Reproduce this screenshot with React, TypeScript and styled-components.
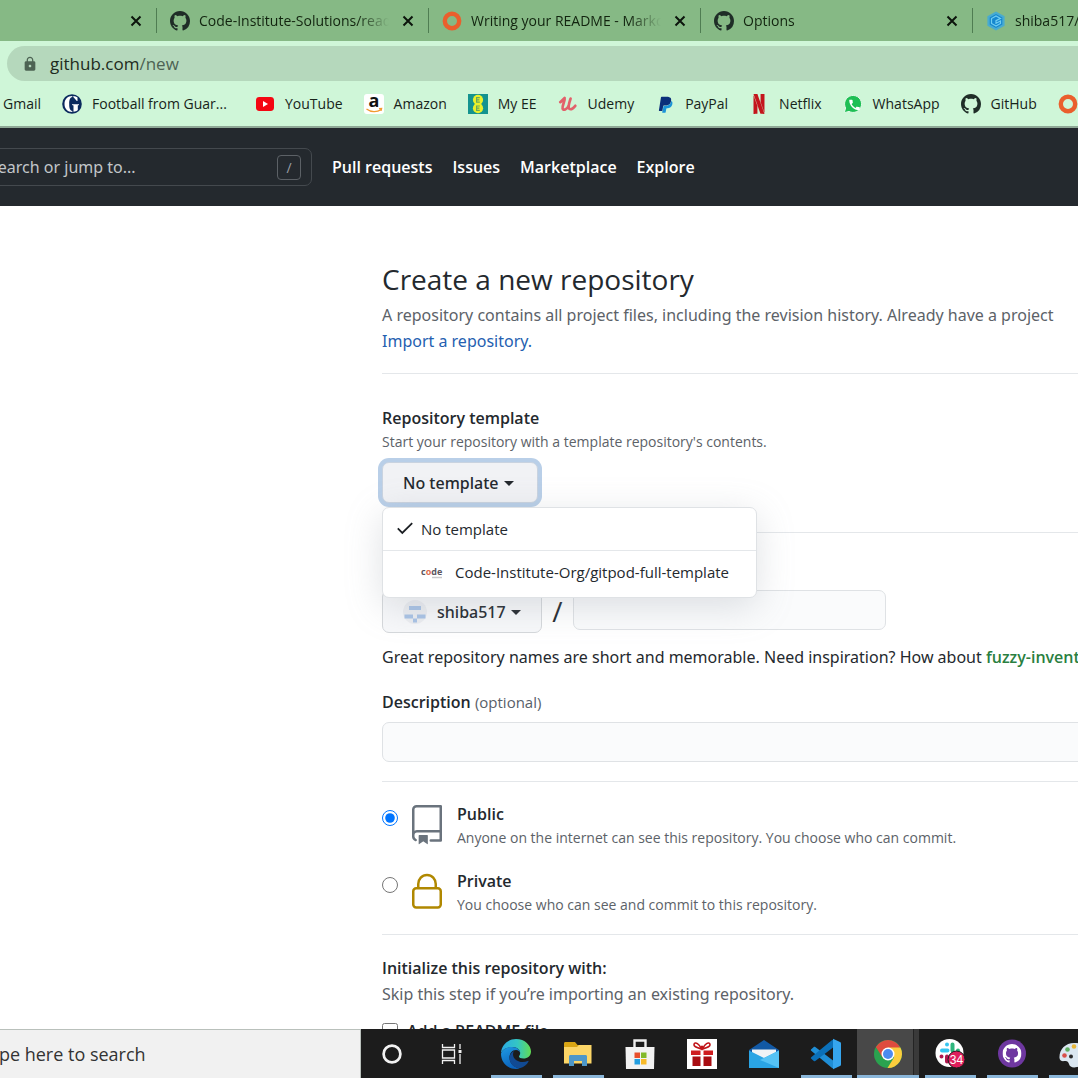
import React from "react";
import styled, { createGlobalStyle, css } from "styled-components";
import { MdCall, MdLock } from "react-icons/md";
import { SiNetflix } from "react-icons/si";

const GlobalStyle = createGlobalStyle`
  *, *::before, *::after { box-sizing: border-box; }
  body {
    margin: 0;
    font-family: "Open Sans", "Noto Sans", sans-serif;
    color: #24292e;
    background: #fff;
  }
  button, input { font: inherit; color: inherit; }
  h1, h2, p { margin: 0; }
`;

const bodyFont = css`
  font-family: "Noto Sans", "Open Sans", sans-serif;
  font-size: 16px;
`;

const Screen = styled.div`
  display: flex;
  flex-direction: column;
  height: 100vh;
  overflow: hidden;
`;

/* ---------- Browser chrome ---------- */

const TabStrip = styled.div`
  display: flex;
  flex: none;
  height: 41px;
  background: #86b985;
`;

const Tab = styled.div<{ $trailing?: boolean }>`
  display: flex;
  align-items: center;
  flex: none;
  gap: 9px;
  width: ${(p) => (p.$trailing ? "156px" : "272px")};
  justify-content: ${(p) => (p.$trailing ? "flex-end" : "flex-start")};
  padding: 0 10px 0 14px;
  color: #12240f;
  font-size: 14px;
  line-height: 20px;

  & + & {
    background: linear-gradient(#4f7d52, #4f7d52) 0 8px / 1px 25px no-repeat;
  }
`;

const TabTitle = styled.span`
  flex: 1;
  min-width: 0;
  overflow: hidden;
  white-space: nowrap;
  mask-image: linear-gradient(to right, #000 calc(100% - 32px), transparent);
`;

const TabClose = styled.button`
  display: flex;
  align-items: center;
  justify-content: center;
  flex: none;
  width: 20px;
  height: 20px;
  padding: 0;
  border: 0;
  background: none;
`;

const Toolbar = styled.div`
  flex: none;
  height: 87px;
  padding-top: 5px;
  background: #cff6d8;
  border-bottom: 2px solid #8fa896;
`;

const AddressBar = styled.div`
  display: flex;
  align-items: center;
  gap: 12px;
  height: 35px;
  margin-left: 7px;
  padding-left: 15px;
  border-radius: 18px 0 0 18px;
  background: #b5d8bc;
  color: #4d6353;
  font-size: 17px;
  line-height: 24px;
`;

const Host = styled.span`
  color: #1d2b20;
`;

const Bookmarks = styled.nav`
  display: flex;
  align-items: center;
  gap: 21px;
  height: 45px;
  padding-left: 3px;
`;

const Bookmark = styled.a<{ $truncated?: boolean }>`
  display: flex;
  align-items: center;
  flex: none;
  gap: 10px;
  min-width: ${(p) => (p.$truncated ? "172px" : "0")};
  color: #17241a;
  font-size: 14px;
  line-height: 20px;
  text-decoration: none;
`;

/* ---------- GitHub header ---------- */

const SiteHeader = styled.header`
  display: flex;
  align-items: center;
  flex: none;
  gap: 20px;
  height: 78px;
  background: #24292e;
`;

const SearchBox = styled.label`
  display: flex;
  align-items: center;
  flex: none;
  width: 332px;
  height: 38px;
  margin-left: -20px;
  padding-right: 10px;
  border: 1px solid #44494e;
  border-radius: 7px;
`;

const SearchInput = styled.input`
  flex: 1;
  min-width: 0;
  padding: 0 0 0 8px;
  border: 0;
  outline: 0;
  background: none;
  ${bodyFont}

  &::placeholder {
    color: #c2c6c9;
    opacity: 1;
  }
`;

const SlashKey = styled.kbd`
  width: 24px;
  height: 25px;
  border: 1px solid #5c6166;
  border-radius: 4px;
  color: #9a9fa4;
  font: 14px/23px "Open Sans", sans-serif;
  text-align: center;
`;

const HeaderLink = styled.a`
  color: #fff;
  font-size: 16px;
  font-weight: 600;
  line-height: 24px;
  text-decoration: none;
`;

/* ---------- Form ---------- */

const Main = styled.main`
  flex: 1;
  min-height: 0;
  overflow: hidden;
  padding: 53px 0 0 382px;
  ${bodyFont}
  line-height: 26px;
`;

const Title = styled.h1`
  margin-bottom: 3px;
  font-family: "Open Sans", sans-serif;
  font-size: 28px;
  font-weight: 400;
  line-height: 40px;
`;

const Lead = styled.p`
  color: #5c6268;
  white-space: nowrap;
`;

const Link = styled.a`
  color: #2460b0;
  text-decoration: none;
`;

const Rule = styled.hr<{ $top: number; $bottom: number }>`
  height: 1px;
  margin: ${(p) => p.$top}px 0 ${(p) => p.$bottom}px;
  border: 0;
  background: #e4e7ea;
`;

const strongText = css`
  font-family: "Open Sans", sans-serif;
  font-size: 16px;
  font-weight: 600;
`;

const Heading = styled.h2`
  ${strongText}
  line-height: 26px;
`;

const Note = styled.span`
  display: block;
  color: #5c6268;
  font-family: "Open Sans", sans-serif;
  font-size: 14px;
  line-height: 22px;
`;

const MenuAnchor = styled.div`
  position: relative;
  margin-top: 9px;
`;

const selectButton = css`
  display: flex;
  align-items: center;
  gap: 5px;
  padding: 0 20px;
  border: 1px solid #d5d8db;
  border-radius: 7px;
  font-weight: 500;
  line-height: 24px;
`;

const TemplateButton = styled.button`
  ${selectButton}
  height: 41px;
  width: 156px;
  background: #f1f2f5;
  border-color: #c9d3e0;
  box-shadow: 0 0 0 4px #b9cfe8;
`;

const OwnerButton = styled.button`
  ${selectButton}
  height: 43px;
  width: 160px;
  background: #f7f8fa;
`;

const OwnerName = styled.span`
  margin-left: 5px;
`;

const Caret = styled.span`
  margin-top: 2px;
  border: 5px solid transparent;
  border-top-color: #24292e;
  border-bottom: 0;
`;

const Menu = styled.div`
  position: absolute;
  z-index: 1;
  top: 45px;
  left: 0;
  width: 375px;
  border: 1px solid #dfe2e5;
  border-radius: 7px;
  background: #fff;
  box-shadow: 0 8px 36px rgba(140, 149, 159, 0.28);
`;

const MenuItem = styled.button`
  display: flex;
  align-items: center;
  width: 100%;
  height: 42px;
  padding: 0 14px;
  border: 0;
  background: none;
  font-family: "Open Sans", sans-serif;
  font-size: 15px;
  font-weight: 500;
  line-height: 22px;
  white-space: nowrap;

  & + & {
    height: 47px;
    padding: 0 0 4px 38px;
    border-top: 1px solid #e4e7ea;
  }
`;

const MenuLabel = styled.span<{ $gap: number }>`
  margin-left: ${(p) => p.$gap}px;
`;

const NameRow = styled.div`
  display: flex;
  align-items: flex-start;
`;

const Slash = styled.span`
  width: 31px;
  font-family: "Open Sans", sans-serif;
  font-size: 28px;
  line-height: 43px;
  text-align: center;
`;

const TextField = styled.input`
  height: 40px;
  padding: 0 12px;
  border: 1px solid #dfe2e5;
  border-radius: 7px;
  background: #fafbfc;
`;

const NameField = styled(TextField)`
  width: 313px;
`;

const DescriptionField = styled(TextField)`
  display: block;
  width: calc(100% + 16px);
  margin-top: 7px;
`;

const Hint = styled.p`
  margin-top: 11px;
  white-space: nowrap;
`;

const Suggestion = styled.strong`
  color: #2a7f41;
  ${strongText}
`;

const FieldLabel = styled.label`
  display: block;
  margin-top: 19px;
  ${strongText}
`;

const Optional = styled.small`
  color: #586069;
  font-size: 15px;
  font-weight: 500;
`;

const Choice = styled.label<{ $top: number }>`
  display: flex;
  margin-top: ${(p) => p.$top}px;
`;

const Radio = styled.input`
  width: 16px;
  height: 16px;
  margin: 9px 14px 0 0;
  accent-color: #0075ff;
`;

const ChoiceIcon = styled.svg`
  flex: none;
  width: 40px;
  height: 40px;
  margin: 4px 10px 0 -5px;
`;

const ChoiceTitle = styled.span`
  display: block;
  ${strongText}
`;

const CheckRow = styled.label`
  display: flex;
  align-items: center;
  gap: 9px;
  margin-top: 11px;
  ${strongText}
`;

const Checkbox = styled.input`
  width: 16px;
  height: 16px;
  margin: 0;
`;

/* ---------- Taskbar ---------- */

const Taskbar = styled.footer`
  display: flex;
  flex: none;
  height: 49px;
  background: #1c1c1c;
`;

const TaskSearch = styled.input`
  flex: none;
  width: 381px;
  margin-left: -20px;
  padding: 0;
  border: 1px solid #b9c0bb;
  border-width: 1px 1px 0 0;
  border-radius: 0;
  background: #f1f1f1;
  font-size: 18px;

  &::placeholder {
    color: #333;
    opacity: 1;
  }
`;

const TaskButton = styled.button<{ $running?: boolean; $active?: boolean }>`
  display: flex;
  align-items: center;
  justify-content: center;
  flex: none;
  width: 62px;
  padding: 0;
  border: 0;
  background: ${(p) =>
    p.$active
      ? "linear-gradient(#8ab6d9, #8ab6d9) 0 100% / 100% 3px no-repeat, linear-gradient(90deg, #484848 56px, #242424 56px, #242424 57px, #3a3a3a 57px)"
      : p.$running
        ? "linear-gradient(#8ab6d9, #8ab6d9) 50% 100% / 51px 3px no-repeat"
        : "none"};
`;

/* ---------- Drawings ---------- */

const MARK =
  "M8 0C3.58 0 0 3.58 0 8c0 3.54 2.29 6.53 5.47 7.59.4.07.55-.17.55-.38 0-.19-.01-.82-.01-1.49-2.01.37-2.53-.49-2.69-.94-.09-.23-.48-.94-.82-1.13-.28-.15-.68-.52-.01-.53.63-.01 1.08.58 1.23.82.72 1.21 1.87.87 2.33.66.07-.52.28-.87.51-1.07-1.78-.2-3.64-.89-3.64-3.95 0-.87.31-1.59.82-2.15-.08-.2-.36-1.02.08-2.12 0 0 .67-.21 2.2.82.64-.18 1.32-.27 2-.27.68 0 1.36.09 2 .27 1.53-1.04 2.2-.82 2.2-.82.44 1.1.16 1.92.08 2.12.51.56.82 1.27.82 2.15 0 3.07-1.87 3.75-3.65 3.95.29.25.54.73.54 1.48 0 1.07-.01 1.93-.01 2.2 0 .21.15.46.55.38A8.013 8.013 0 0 0 16 8c0-4.42-3.58-8-8-8z";

const Octocat = () => (
  <svg width="20" height="20" viewBox="0 0 16 16" fill="#1f2d27">
    <path d={MARK} />
  </svg>
);

const Ring = () => (
  <svg width="20" height="20" viewBox="0 0 20 20">
    <circle cx="10" cy="10" r="7.2" fill="none" stroke="#ea5f2d" strokeWidth="4.4" />
  </svg>
);

const Cube = () => (
  <svg width="20" height="20" viewBox="0 0 20 20">
    <path d="M10 .4 18.6 5.2v9.6L10 19.6 1.4 14.8V5.2z" fill="#48abd0" />
    <path d="M10 3 16.300 6.500v7L10 17l-6.300-3.500v-7z" fill="#1687cf" />
    <path d="M14.500 7.400 10 4.900 5.500 7.500v5l4.500 2.600 4.500-2.600V10L10 12.300V9.600z" fill="none" stroke="#6fcdf0" strokeWidth="1.200" />
  </svg>
);

const Cross = () => (
  <svg width="12" height="12" viewBox="0 0 12 12">
    <path d="m1.5 1.5 9 9m0-9-9 9" stroke="#0c150c" strokeWidth="2" />
  </svg>
);

const Guardian = () => (
  <svg width="20" height="20" viewBox="0 0 20 20">
    <circle cx="10" cy="10" r="9.8" fill="#0b2a5e" />
    <path d="M10.300 2C5.500 2 2.500 5.500 2.500 10s3 8 7.800 8v-1C7.800 16.500 7.200 14 7.200 10s.6-6.500 3.100-7z" fill="#fff" />
    <path d="M11.300 2c1.700.100 3.200.7 4.200 1.500v3.500h-.700L11.300 3z" fill="#fff" />
    <path d="M10 10.300h7v.8l-1.200.5v4.400c-1 .9-2.600 1.600-4.300 1.800v-6.200l-1.500-.5z" fill="#fff" />
  </svg>
);

const YouTube = () => (
  <svg width="20" height="20" viewBox="0 0 20 20">
    <rect x="1" y="3" width="18" height="14" rx="3.400" fill="#f40612" />
    <path d="m8 7 5 3-5 3z" fill="#fff" />
  </svg>
);

const Amazon = () => (
  <svg width="20" height="20" viewBox="0 0 20 20">
    <rect width="20" height="20" rx="3" fill="#fff" />
    <text x="10" y="13" textAnchor="middle" fontFamily="Open Sans" fontWeight="700" fontSize="18" fill="#111">
      a
    </text>
    <path d="M2.500 15c4.500 3.400 10.500 3.400 14.400.700M15 14.600l2.600-.2-.6 2.500" fill="none" stroke="#f29a2e" strokeWidth="1.300" />
  </svg>
);

const EE = () => (
  <svg width="20" height="20" viewBox="0 0 20 20">
    <rect width="20" height="20" fill="#14938f" />
    <circle cx="10" cy="5.800" r="5.100" fill="#eaf02a" />
    <circle cx="10" cy="14.200" r="5.100" fill="#eaf02a" />
    <path d="M11.800 3.700H8.600v4.400h3.200M8.600 5.900h2.800M11.800 12H8.600v4.400h3.200M8.600 14.200h2.800" fill="none" stroke="#6aa85a" strokeWidth="1.200" />
  </svg>
);

const Udemy = () => (
  <svg width="20" height="20" viewBox="0 0 20 20" fill="none" stroke="#e2616b" strokeLinecap="round" strokeLinejoin="round">
    <path d="M2.200 8.200C4 7.200 5.600 5 6.600 4 7.400 7 3.800 11.500 4.600 14.600c.7 2.200 4.200 1 6-2.600" strokeWidth="2.700" />
    <path d="M12.600 4.600c-1 3-3 8.400-1.300 10.200 1.500 1.200 4-.6 6-3" strokeWidth="2.700" />
  </svg>
);

const PayPal = () => (
  <svg width="20" height="20" viewBox="-4 -4 30 30">
    <path
      fill="#1b94d8"
      d="M21.222 6.917a3.350 3.350 0 0 0-.607-.541c-.013.076-.026.175-.041.254-.93 4.778-4.005 7.201-9.138 7.201h-2.190a.563.563 0 0 0-.556.479l-1.187 7.527h-.506l-.24 1.516a.56.56 0 0 0 .554.647h3.882c.46 0 .85-.334.922-.788.06-.26.76-4.852.816-5.090a.932.932 0 0 1 .923-.788h.58c3.760 0 6.705-1.528 7.565-5.946.36-1.847.174-3.388-.777-4.471z"
    />
    <path
      fill="#0b2f7a"
      d="M7.076 21.337H2.470a.641.641 0 0 1-.633-.74L4.944.901C5.026.382 5.474 0 5.998 0h7.460c2.570 0 4.578.543 5.690 1.810 1.010 1.150 1.304 2.420 1.012 4.287-.023.143-.047.288-.077.437-.983 5.050-4.349 6.797-8.647 6.797h-2.190c-.524 0-.968.382-1.050.9l-1.120 7.106z"
    />
  </svg>
);

const WhatsApp = () => (
  <svg width="20" height="20" viewBox="0 0 20 20">
    <path d="M1.300 18.700 2.600 14A8.500 8.500 0 1 1 6 17.400z" fill="#1fbf55" stroke="#e4fbe9" strokeWidth="1" />
    <MdCall x="4.500" y="4" width="11.500" height="11.500" color="#fff" />
  </svg>
);

const Check = () => (
  <svg width="16" height="16" viewBox="0 0 16 16">
    <path d="m.8 7.400 4.500 4.500L15.200 2.200" fill="none" stroke="#1b1f23" strokeWidth="1.800" />
  </svg>
);

const CodeLogo = () => (
  <svg width="22" height="16" viewBox="0 0 22 16" fontFamily="Open Sans" fontWeight="700">
    <text x="0" y="11" fontSize="9" fill="#5b5560">
      c<tspan fill="#e06a4c">o</tspan>de
    </text>
    <path d="M11 13.500h10" stroke="#c9c9cc" strokeWidth="1.500" />
  </svg>
);

const Avatar = () => (
  <svg width="24" height="24" viewBox="0 0 24 24">
    <circle cx="12" cy="12" r="12" fill="#ebedf1" />
    <path d="M6 6h12v4H6zM1.500 14.500H10v4H1.500zM14 14.500h8.500v4H14zM10 18.500h4v4h-4z" fill="#a9c3e6" />
  </svg>
);

const RepoIcon = () => (
  <ChoiceIcon viewBox="0 0 24 24" fill="#6a737d" fillRule="evenodd">
    <path d="M3 2.750A2.750 2.750 0 0 1 5.750 0h14.500a.75.75 0 0 1 .75.75v20.500a.75.75 0 0 1-.75.75h-6a.75.75 0 0 1 0-1.500h5.250v-4H6A1.500 1.500 0 0 0 4.500 18v.75c0 .716.43 1.334 1.050 1.605a.75.75 0 0 1-.6 1.374A3.250 3.250 0 0 1 3 18.750v-16zM19.500 1.500V15H6c-.546 0-1.059.146-1.500.401V2.750c0-.69.56-1.250 1.250-1.250H19.500z" />
    <path d="M7 18.250a.25.25 0 0 1 .25-.25h5a.25.25 0 0 1 .25.25v5.010a.25.25 0 0 1-.397.201l-2.206-1.604a.25.25 0 0 0-.294 0L7.397 23.460a.25.25 0 0 1-.397-.2v-5.010z" />
  </ChoiceIcon>
);

const LockIcon = () => (
  <ChoiceIcon viewBox="0 0 24 24" fill="none" stroke="#b08800" strokeWidth="1.500">
    <rect x="3.750" y="9.750" width="16.500" height="11.500" rx="1.750" />
    <path d="M6.750 9.750v-2.500C6.750 4.200 9 1.750 12 1.750s5.250 2.450 5.250 5.500v2.500" />
  </ChoiceIcon>
);

const Cortana = () => (
  <svg width="22" height="22" viewBox="0 0 22 22">
    <circle cx="11" cy="11" r="8.400" fill="none" stroke="#f2f2f2" strokeWidth="2.700" />
  </svg>
);

const TaskView = () => (
  <svg width="26" height="22" viewBox="0 0 26 22" fill="none" stroke="#f2f2f2" strokeWidth="1.300">
    <path d="M1.500 1v3.500h12V1M1.500 21v-3.500h12V21M1.500 7h12v8h-12zM19 1v5M19 11v10" />
    <rect x="17.500" y="7" width="3" height="3" fill="#f2f2f2" stroke="none" />
  </svg>
);

const Edge = () => (
  <svg width="32" height="32" viewBox="0 0 32 32">
    <defs>
      <linearGradient id="edgeTop" x1="0" y1="0.500" x2="1" y2="0.500">
        <stop offset="0" stopColor="#2aa9e4" />
        <stop offset="0.550" stopColor="#34c6c4" />
        <stop offset="1" stopColor="#62dc52" />
      </linearGradient>
      <linearGradient id="edgeBase" x1="0" y1="0" x2="0.400" y2="1">
        <stop offset="0" stopColor="#1f9be2" />
        <stop offset="1" stopColor="#0b63bd" />
      </linearGradient>
    </defs>
    <path d="M1 15C1.500 7 8 1 16 1c9 0 15 6.500 15 12.500 0 4.500-3.500 7-7.500 7-3 0-4.500-1-4.500-2 0-.8 1.200-1.300 1.200-3.500 0-3-3-6-8-6C7 9 3 11 1 15z" fill="url(#edgeTop)" />
    <path d="M1 15.500C3 11 7 9 12 9c5 0 8.200 3 8.200 6-.4-1.500-1.800-3-4.200-3-4 0-6.500 3.500-6.500 7.500 0 6 5 10.500 10.500 10.700-1.300.500-2.600.800-4 .800C7.500 31 1 24.500 1 15.500z" fill="url(#edgeBase)" />
    <path d="M14 13c-3 1.500-4.500 4-4.500 7 0 6 5 10.500 11 10.100 3.500-1.100 6.500-3.600 8-6.600.3-.6-.2-.9-.8-.6C21.500 26 13 22.500 13 16.500c0-1.400.3-2.500 1-3.500z" fill="#114a93" />
  </svg>
);

const Folder = () => (
  <svg width="32" height="32" viewBox="0 0 32 32">
    <path d="M2 5.500C2 4.700 2.500 4 3.500 4H13l2.500 3H29v4H2z" fill="#d9a514" />
    <path d="M2 9h13l2-2h12.500v18.500H2z" fill="#fbd567" />
    <path d="M7 28V18.500C7 17.500 7.700 17 8.500 17h15c.800 0 1.500.500 1.500 1.500V28h-5v-5h-8v5z" fill="#4d97c9" />
  </svg>
);

const Store = () => (
  <svg width="32" height="32" viewBox="0 0 32 32">
    <path d="M10.500 9V2.500h11V9" fill="none" stroke="#eeeeee" strokeWidth="2.400" />
    <path d="M1.500 9h29l-.500 22H2z" fill="#f2f2f2" />
    <path d="M10.500 14.500H16V20h-5.500z" fill="#e84f2c" />
    <path d="M17 14.500h5.500V20H17z" fill="#82b92b" />
    <path d="M10.500 21H16v5.500h-5.500z" fill="#239ee0" />
    <path d="M17 21h5.500v5.500H17z" fill="#f8ba28" />
  </svg>
);

const Gift = () => (
  <svg width="30" height="30" viewBox="0 0 30 30">
    <rect width="30" height="30" fill="#fff" />
    <path d="M4 11.500h9.500V16H4zM16.500 11.500H26V16h-9.500z" fill="#cf1c1f" />
    <path d="M5.500 17.500h8V27h-8zM16.500 17.500h8V27h-8z" fill="#a80d12" />
    <path d="M14.800 10.500C12.500 4.500 8 2.500 7 5.200c-.6 3 3.700 3.600 8 5 4.300-1.400 8.600-2 8-5-1-2.700-5.500-.7-7.800 5.300z" fill="none" stroke="#c01318" strokeWidth="1.600" />
    <circle cx="15" cy="8" r="1.500" fill="#c01318" />
  </svg>
);

const Mail = () => (
  <svg width="32" height="32" viewBox="0 0 32 32">
    <path d="M1 12 16 2l15 10v4H1z" fill="#1259a5" />
    <path d="M4 11.500h24V20L16 25 4 20z" fill="#f0f3f6" />
    <path d="M1 12.500 16 20l15-7.500V30H1z" fill="#2aa4e4" />
    <path d="M31 12.500 12 22l19 8z" fill="#55c2f4" />
  </svg>
);

const VsCode = () => (
  <svg width="32" height="32" viewBox="0 0 32 32">
    <path d="m1 11.500 2.500-2.300c.5-.5 1.200-.5 1.800-.1L24 23.200V30c-.8.5-1.500.3-2.200-.3L1.200 12.800c-.5-.4-.5-.9-.2-1.300z" fill="#1f8ed6" />
    <path d="m1 20.500 2.500 2.300c.5.5 1.200.5 1.800.1L24 8.800V2c-.8-.5-1.500-.3-2.200.3L1.200 19.200c-.5.4-.5.9-.2 1.300z" fill="#0b70b9" />
    <path d="M23 .8 30 4c.7.3 1 .8 1 1.500v21c0 .7-.3 1.200-1 1.500l-7 3.200z" fill="#36a6ef" />
  </svg>
);

const Chrome = () => (
  <svg width="30" height="30" viewBox="0 0 30 30">
    <circle cx="15" cy="15" r="14" fill="#2aa24f" />
    <path d="M15 15 2.900 8A14 14 0 0 1 27.100 8z" fill="#df4c3e" />
    <path d="M15 8.500h12.400A14 14 0 0 1 14.500 29L21 18.500z" fill="#fbcd3d" />
    <path d="M2.900 8 9.500 18.500 15 15V8.500z" fill="#df4c3e" />
    <circle cx="15" cy="15" r="6.500" fill="#fff" />
    <circle cx="15" cy="15" r="5" fill="#4c8bf0" />
  </svg>
);

const Slack = () => (
  <svg width="32" height="32" viewBox="0 0 32 32">
    <circle cx="15.500" cy="15" r="14" fill="#fff" />
    <g strokeWidth="4" strokeLinecap="round" fill="none">
      <path d="M8 12.500h5.500M13 6.500v.01" stroke="#36c5f0" />
      <path d="M18.500 6.500v6M24 12.500v.01" stroke="#2eb67d" />
      <path d="M18.500 18.500H24" stroke="#ecb22e" />
      <path d="M13 18.500v5M7.500 18.500v.01" stroke="#b0184f" />
    </g>
    <circle cx="22.500" cy="21.500" r="8.500" fill="#de1f5c" stroke="#1c1c1c" strokeWidth="1" />
    <text x="22.500" y="25.500" textAnchor="middle" fontFamily="Liberation Sans" fontSize="12" fill="#fff">
      34
    </text>
  </svg>
);

const GitHubDesktop = () => (
  <svg width="30" height="30" viewBox="0 0 30 30">
    <circle cx="15" cy="14.500" r="14" fill="#6e37a0" />
    <svg x="5.500" y="5" width="19" height="19" viewBox="0 0 16 16">
      <path d={MARK} fill="#fff" />
    </svg>
  </svg>
);

const Paint = () => (
  <svg width="32" height="32" viewBox="0 0 32 32">
    <path d="M18 5C8 4 1 11 1.500 20c.300 3 3 3.500 5 3 3-.500 4 1 4.500 3 .600 3 4 4 8 3 7-1.500 12-7 12-13S26 5.800 18 5z" fill="#dbe7f1" />
    <circle cx="6.500" cy="17.500" r="2.300" fill="#d8504a" />
    <circle cx="9.500" cy="11.500" r="2.300" fill="#5fae62" />
    <circle cx="16" cy="8.500" r="2.300" fill="#e8b63a" />
    <circle cx="13" cy="18.500" r="2" fill="#2a2a2a" />
    <path d="M22 2 20 20l5 6 4-22z" fill="#c98c4b" />
  </svg>
);

/* ---------- Page ---------- */

const tabs = [
  { title: "Code-Institute-Solutions/readme", icon: <Octocat /> },
  { title: "Writing your README - Markdown", icon: <Ring /> },
  { title: "Options", icon: <Octocat /> },
  { title: "shiba517/", icon: <Cube /> },
];

const bookmarks = [
  { label: "Gmail", icon: null },
  { label: "Football from Guar...", icon: <Guardian />, truncated: true },
  { label: "YouTube", icon: <YouTube /> },
  { label: "Amazon", icon: <Amazon /> },
  { label: "My EE", icon: <EE /> },
  { label: "Udemy", icon: <Udemy /> },
  { label: "PayPal", icon: <PayPal /> },
  { label: "Netflix", icon: <SiNetflix size={20} color="#c4151c" /> },
  { label: "WhatsApp", icon: <WhatsApp /> },
  { label: "GitHub", icon: <Octocat /> },
  { label: "", icon: <Ring /> },
];

const apps = [
  { name: "Cortana", icon: <Cortana /> },
  { name: "Task View", icon: <TaskView /> },
  { name: "Edge", icon: <Edge />, running: true },
  { name: "File Explorer", icon: <Folder />, running: true },
  { name: "Store", icon: <Store /> },
  { name: "Gift", icon: <Gift /> },
  { name: "Mail", icon: <Mail /> },
  { name: "Visual Studio Code", icon: <VsCode />, running: true },
  { name: "Chrome", icon: <Chrome />, active: true },
  { name: "Slack", icon: <Slack />, running: true },
  { name: "GitHub Desktop", icon: <GitHubDesktop />, running: true },
  { name: "Paint", icon: <Paint />, running: true },
];

export default function App() {
  return (
    <Screen>
      <GlobalStyle />
      <TabStrip>
        <Tab $trailing>
          <TabClose aria-label="Close tab">
            <Cross />
          </TabClose>
        </Tab>
        {tabs.map((tab) => (
          <Tab key={tab.title}>
            {tab.icon}
            <TabTitle>{tab.title}</TabTitle>
            <TabClose aria-label="Close tab">
              <Cross />
            </TabClose>
          </Tab>
        ))}
      </TabStrip>
      <Toolbar>
        <AddressBar>
          <MdLock size={16} />
          <span>
            <Host>github.com</Host>/new
          </span>
        </AddressBar>
        <Bookmarks>
          {bookmarks.map((item, i) => (
            <Bookmark key={i} href="#" aria-label={item.label || "Bookmark"} $truncated={item.truncated}>
              {item.icon}
              {item.label}
            </Bookmark>
          ))}
        </Bookmarks>
      </Toolbar>

      <SiteHeader>
        <SearchBox>
          <SearchInput aria-label="Search" placeholder="Search or jump to..." />
          <SlashKey>/</SlashKey>
        </SearchBox>
        <HeaderLink href="#">Pull requests</HeaderLink>
        <HeaderLink href="#">Issues</HeaderLink>
        <HeaderLink href="#">Marketplace</HeaderLink>
        <HeaderLink href="#">Explore</HeaderLink>
      </SiteHeader>

      <Main>
        <Title>Create a new repository</Title>
        <Lead>
          A repository contains all project files, including the revision history. Already have a project
          <br />
          <Link href="#">Import a repository.</Link>
        </Lead>
        <Rule $top={19} $bottom={31} />

        <Heading>Repository template</Heading>
        <Note>Start your repository with a template repository's contents.</Note>
        <MenuAnchor>
          <TemplateButton aria-haspopup="menu" aria-expanded="true">
            No template
            <Caret />
          </TemplateButton>
          <Menu role="menu">
            <MenuItem role="menuitem">
              <Check />
              <MenuLabel $gap={8}>No template</MenuLabel>
            </MenuItem>
            <MenuItem role="menuitem">
              <CodeLogo />
              <MenuLabel $gap={12}>Code-Institute-Org/gitpod-full-template</MenuLabel>
            </MenuItem>
          </Menu>
        </MenuAnchor>
        <Rule $top={29} $bottom={57} />

        <NameRow>
          <OwnerButton aria-haspopup="menu">
            <Avatar />
            <OwnerName>shiba517</OwnerName>
            <Caret />
          </OwnerButton>
          <Slash>/</Slash>
          <NameField aria-label="Repository name" />
        </NameRow>
        <Hint>
          Great repository names are short and memorable. Need inspiration? How about{" "}
          <Suggestion>fuzzy-invention</Suggestion>
        </Hint>
        <FieldLabel htmlFor="description">
          Description <Optional>(optional)</Optional>
        </FieldLabel>
        <DescriptionField id="description" />
        <Rule $top={19} $bottom={19} />

        <Choice $top={0}>
          <Radio type="radio" name="visibility" defaultChecked />
          <RepoIcon />
          <span>
            <ChoiceTitle>Public</ChoiceTitle>
            <Note>Anyone on the internet can see this repository. You choose who can commit.</Note>
          </span>
        </Choice>
        <Choice $top={19}>
          <Radio type="radio" name="visibility" />
          <LockIcon />
          <span>
            <ChoiceTitle>Private</ChoiceTitle>
            <Note>You choose who can see and commit to this repository.</Note>
          </span>
        </Choice>
        <Rule $top={18} $bottom={20} />

        <Heading>Initialize this repository with:</Heading>
        <Lead>Skip this step if you’re importing an existing repository.</Lead>
        <CheckRow>
          <Checkbox type="checkbox" />
          Add a README file
        </CheckRow>
      </Main>

      <Taskbar>
        <TaskSearch aria-label="Search" placeholder="Type here to search" />
        {apps.map((app) => (
          <TaskButton key={app.name} aria-label={app.name} $running={app.running} $active={app.active}>
            {app.icon}
          </TaskButton>
        ))}
      </Taskbar>
    </Screen>
  );
}
